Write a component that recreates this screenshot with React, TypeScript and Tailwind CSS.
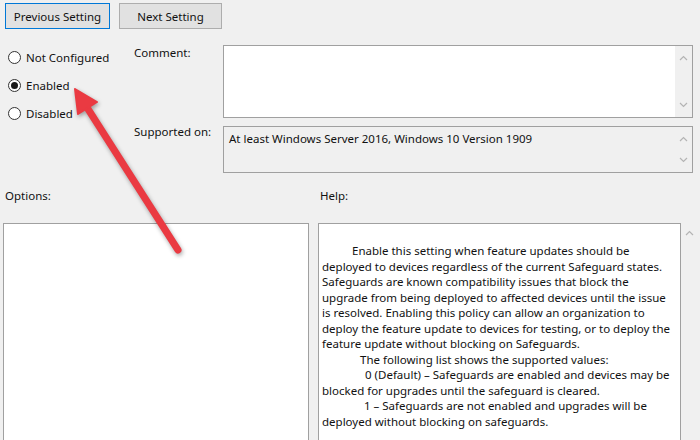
import React from "react";

const HELP_LINES: { text: string; indent: number }[] = [
  { text: "Enable this setting when feature updates should be", indent: 30 },
  { text: "deployed to devices regardless of the current Safeguard states.", indent: 0 },
  { text: "Safeguards are known compatibility issues that block the", indent: 0 },
  { text: "upgrade from being deployed to affected devices until the issue", indent: 0 },
  { text: "is resolved. Enabling this policy can allow an organization to", indent: 0 },
  { text: "deploy the feature update to devices for testing, or to deploy the", indent: 0 },
  { text: "feature update without blocking on Safeguards.", indent: 0 },
  { text: "The following list shows the supported values:", indent: 38 },
  { text: "0 (Default) – Safeguards are enabled and devices may be", indent: 43 },
  { text: "blocked for upgrades until the safeguard is cleared.", indent: 0 },
  { text: "1 – Safeguards are not enabled and upgrades will be", indent: 42 },
  { text: "deployed without blocking on safeguards.", indent: 0 },
];

function Chevron({ down = false }: { down?: boolean }) {
  return (
    <svg width="9" height="6" viewBox="0 0 9 6" fill="none" stroke="#b4b4b4" strokeWidth={1.2}>
      {down ? <polyline points="1,1 4.5,4.5 8,1" /> : <polyline points="1,5 4.5,1.5 8,5" />}
    </svg>
  );
}

function Radio({ label, checked = false }: { label: string; checked?: boolean }) {
  return (
    <div className="flex h-[15px] items-center gap-[5px]">
      <span className="flex size-[13px] items-center justify-center rounded-full border border-[#333333] bg-white">
        {checked && <span className="size-[7px] rounded-full bg-[#1a1a1a]" />}
      </span>
      <span>{label}</span>
    </div>
  );
}

export default function App() {
  return (
    <div
      className="relative h-[440px] w-[700px] overflow-hidden bg-[#f0f0f0] text-[11.5px] leading-[15px] text-[#111111]"
      style={{ fontFamily: '"Noto Sans", "Open Sans", sans-serif' }}
    >
      {/* Buttons */}
      <div className="flex gap-[9px] pl-[5px] pt-[3px]">
        <button
          type="button"
          className="h-[26px] w-[105px] border border-[#0078d7] bg-[#e1e1e1] text-[11.5px]"
        >
          Previous Setting
        </button>
        <button
          type="button"
          className="h-[26px] w-[103px] border border-[#adadad] bg-[#e1e1e1] text-[11.5px]"
        >
          Next Setting
        </button>
      </div>

      {/* State + comment */}
      <div className="mt-[16px] flex">
        <div className="flex w-[134px] flex-col gap-[13px] pl-[8px] pt-[5px]">
          <Radio label="Not Configured" />
          <Radio label="Enabled" checked />
          <Radio label="Disabled" />
        </div>

        <div className="grid grid-cols-[89px_470px] gap-y-[8px]">
          <div>Comment:</div>
          <div className="flex h-[73px] border border-[#a0a0a0] bg-white">
            <div className="flex-1" />
            <div className="flex w-[17px] flex-col items-center justify-between bg-[#f0f0f0] py-[9px]">
              <Chevron />
              <Chevron down />
            </div>
          </div>

          <div className="-mt-[2px]">Supported on:</div>
          <div className="flex h-[47px] border border-[#a0a0a0] bg-[#f0f0f0]">
            <div className="flex-1 pl-[5px] pt-[4px]">
              At least Windows Server 2016, Windows 10 Version 1909
            </div>
            <div className="flex w-[17px] flex-col items-center justify-between py-[9px]">
              <Chevron />
              <Chevron down />
            </div>
          </div>
        </div>
      </div>

      {/* Options / Help labels */}
      <div className="mt-[15px] flex">
        <div className="w-[320px] pl-[5px]">Options:</div>
        <div>Help:</div>
      </div>

      {/* Options / Help panes */}
      <div className="mt-[20px] flex items-start">
        <div className="ml-[3px] h-[240px] w-[306px] border border-[#a0a0a0] bg-white" />
        <div className="ml-[9px] h-[240px] w-[363px] border border-[#a0a0a0] bg-white pl-[3px] pt-[19px] leading-[15.5px]">
          {HELP_LINES.map((line, i) => (
            <div key={i} className="whitespace-nowrap" style={{ paddingLeft: line.indent }}>
              {line.text}
            </div>
          ))}
        </div>
        <div className="flex w-[17px] justify-center pt-[7px]">
          <Chevron />
        </div>
      </div>

      {/* Red annotation arrow */}
      <svg
        className="pointer-events-none absolute left-0 top-0 drop-shadow-[1px_2px_2px_rgba(0,0,0,0.35)]"
        width="700"
        height="440"
        viewBox="0 0 700 440"
      >
        <line x1="178" y1="250" x2="88" y2="109" stroke="#ea3a42" strokeWidth="7" strokeLinecap="round" />
        <polygon points="75,89 97,102 78,114" fill="#ea3a42" stroke="#ea3a42" strokeWidth="2" strokeLinejoin="round" />
      </svg>
    </div>
  );
}
